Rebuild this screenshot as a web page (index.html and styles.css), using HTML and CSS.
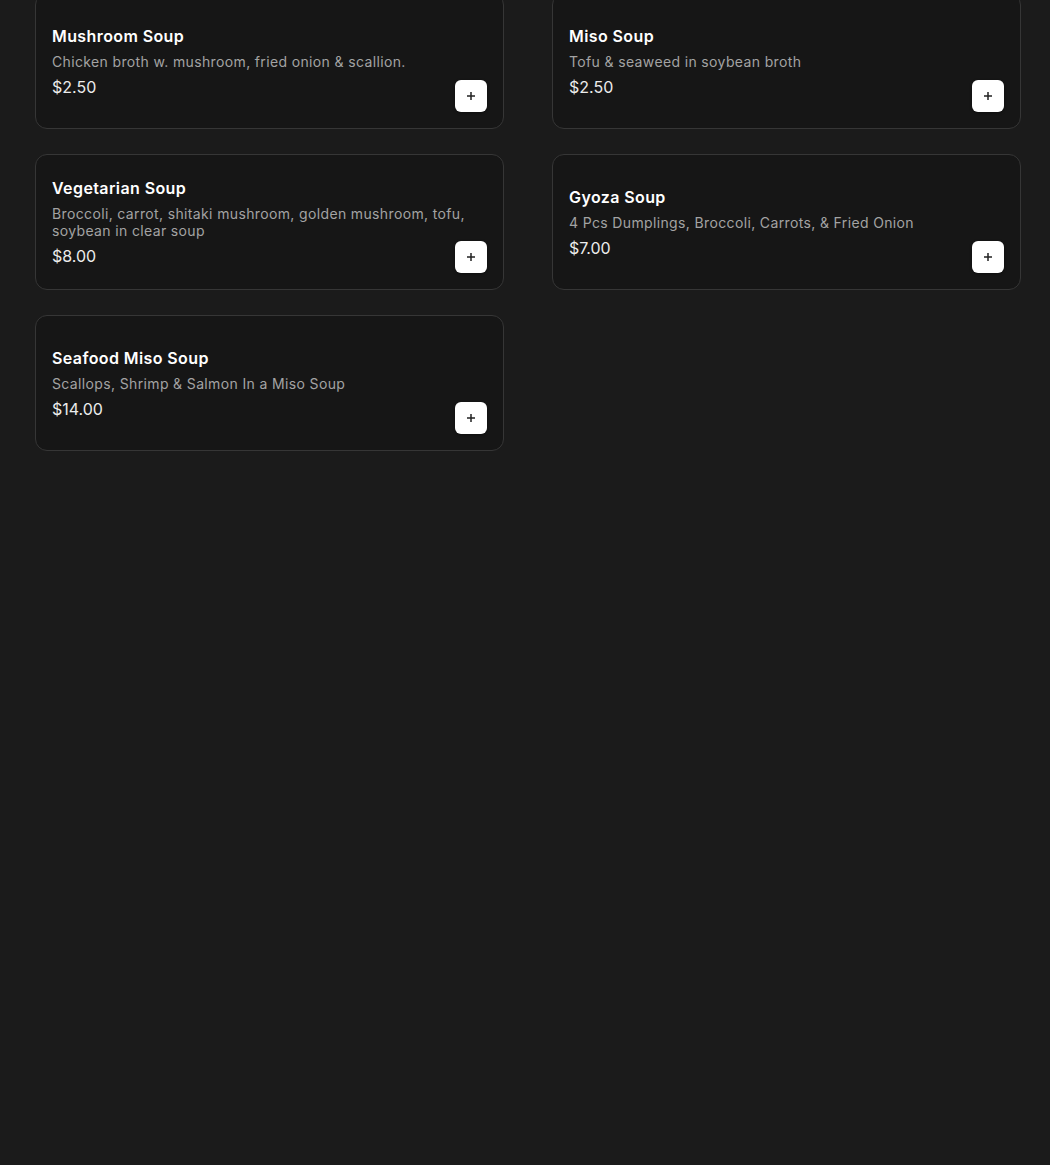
FILE: index.html
```html
<!DOCTYPE html>
<html lang="en">
<head>
  <meta charset="UTF-8" />
  <title>Soups</title>
  <link rel="stylesheet" href="styles.css">
</head>
<body>
  <main class="menu-grid">
    <div class="item-card">
      <div class="item-info">
        <h3 class="item-name">Mushroom Soup</h3>
        <p class="item-desc">Chicken broth w. mushroom, fried onion &amp; scallion.</p>
        <div class="item-price">$2.50</div>
      </div>
      <button class="btn-add" aria-label="Add">
        <svg viewBox="0 0 12 12" width="12" height="12"><path d="M6 2v8M2 6h8" /></svg>
      </button>
    </div>

    <div class="item-card">
      <div class="item-info">
        <h3 class="item-name">Miso Soup</h3>
        <p class="item-desc">Tofu &amp; seaweed in soybean broth</p>
        <div class="item-price">$2.50</div>
      </div>
      <button class="btn-add" aria-label="Add">
        <svg viewBox="0 0 12 12" width="12" height="12"><path d="M6 2v8M2 6h8" /></svg>
      </button>
    </div>

    <div class="item-card">
      <div class="item-info">
        <h3 class="item-name">Vegetarian Soup</h3>
        <p class="item-desc">Broccoli, carrot, shitaki mushroom, golden mushroom, tofu, soybean in clear soup</p>
        <div class="item-price">$8.00</div>
      </div>
      <button class="btn-add" aria-label="Add">
        <svg viewBox="0 0 12 12" width="12" height="12"><path d="M6 2v8M2 6h8" /></svg>
      </button>
    </div>

    <div class="item-card">
      <div class="item-info">
        <h3 class="item-name">Gyoza Soup</h3>
        <p class="item-desc">4 Pcs Dumplings, Broccoli, Carrots, &amp; Fried Onion</p>
        <div class="item-price">$7.00</div>
      </div>
      <button class="btn-add" aria-label="Add">
        <svg viewBox="0 0 12 12" width="12" height="12"><path d="M6 2v8M2 6h8" /></svg>
      </button>
    </div>

    <div class="item-card">
      <div class="item-info">
        <h3 class="item-name">Seafood Miso Soup</h3>
        <p class="item-desc">Scallops, Shrimp &amp; Salmon In a Miso Soup</p>
        <div class="item-price">$14.00</div>
      </div>
      <button class="btn-add" aria-label="Add">
        <svg viewBox="0 0 12 12" width="12" height="12"><path d="M6 2v8M2 6h8" /></svg>
      </button>
    </div>
  </main>
</body>
</html>
```

FILE: styles.css
```css
* { margin: 0; padding: 0; box-sizing: border-box; }

html, body {
  background-color: #1b1b1b;
  font-family: 'Inter', 'Open Sans', sans-serif;
  color: #fff;
}

body {
  min-height: 100vh;
}

.menu-grid {
  display: grid;
  grid-template-columns: 1fr 1fr;
  column-gap: 48px;
  row-gap: 25px;
  padding: 0 29px 0 35px;
  margin-top: -7px;
}

.item-card {
  position: relative;
  display: flex;
  align-items: center;
  min-height: 136px;
  padding: 16px;
  background-color: #161616;
  border: 1px solid #363636;
  border-radius: 12px;
}

.item-name {
  font-size: 16px;
  font-weight: 600;
  line-height: 24px;
  letter-spacing: 0.4px;
  color: #fff;
}

.item-desc {
  margin-top: 5px;
  font-size: 14px;
  line-height: 17px;
  letter-spacing: 0.36px;
  color: #a3a3a3;
}

.item-price {
  margin-top: 5px;
  font-size: 16px;
  line-height: 24px;
  color: #ececec;
}

.btn-add {
  position: absolute;
  right: 16px;
  bottom: 16px;
  width: 32px;
  height: 32px;
  border: none;
  border-radius: 6px;
  background-color: #fff;
  display: flex;
  align-items: center;
  justify-content: center;
  box-shadow: 0 1px 3px rgba(0, 0, 0, 0.4);
  cursor: pointer;
}

.btn-add svg path {
  stroke: #222;
  stroke-width: 1.5;
  fill: none;
}
```
